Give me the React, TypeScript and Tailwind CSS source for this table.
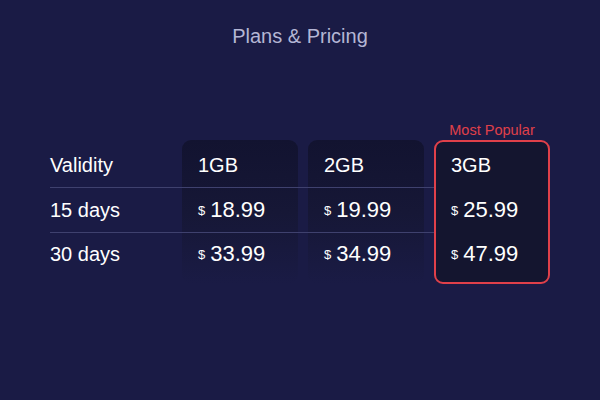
import React from "react";

const font = { fontFamily: '"Liberation Sans", Arial, sans-serif' };

function Price({ v }: { v: string }) {
  return (
    <div className="flex items-center gap-[5px]">
      <span className="text-[13px] leading-none">$</span>
      <span className="text-[22px] leading-[26px]">{v}</span>
    </div>
  );
}

export default function App() {
  const cols = [
    { name: "1GB", p: ["18.99", "33.99"] },
    { name: "2GB", p: ["19.99", "34.99"] },
    { name: "3GB", p: ["25.99", "47.99"] },
  ];
  return (
    <div style={font} className="w-[600px] h-[400px] bg-[#1a1b45] flex flex-col items-center text-white">
      <div className="pt-[22px] text-[20px] leading-[28px] text-[#b4b6d4]">Plans &amp; Pricing</div>
      <div className="mt-[90px] grid grid-cols-[122px_116px_116px_116px] grid-rows-[47px_1px_44px_1px_51px] gap-x-[10px]">
        <div className="col-start-2 row-start-1 row-end-6 rounded-[9px] bg-gradient-to-b from-[#121330] via-[#161736] to-[#1a1b45]" />
        <div className="col-start-3 row-start-1 row-end-6 rounded-[9px] bg-gradient-to-b from-[#121330] via-[#161736] to-[#1a1b45]" />
        <div className="col-start-4 row-start-1 row-end-6 rounded-[9px] bg-[#14152f] border-2 border-[#e0404a] relative">
          <div className="absolute bottom-full left-0 right-0 mb-[4px] text-center text-[14.5px] leading-[16px] text-[#e0404a]">
            Most Popular
          </div>
        </div>
        <div className="col-start-1 col-end-5 row-start-2 bg-[#3f416e]" />
        <div className="col-start-1 col-end-5 row-start-4 bg-[#3f416e]" />
        <div className="col-start-1 row-start-1 flex items-center pt-[3px] text-[20px] leading-[24px]">Validity</div>
        <div className="col-start-1 row-start-3 flex items-center text-[20px] leading-[24px]">15 days</div>
        <div className="col-start-1 row-start-5 flex items-start pt-[9px] text-[20px] leading-[24px]">30 days</div>
        <div className="col-start-2 row-start-1 flex items-center pt-[3px] pl-[16px] text-[20px] leading-[24px] relative">{cols[0].name}</div>
        <div className="col-start-3 row-start-1 flex items-center pt-[3px] pl-[16px] text-[20px] leading-[24px] relative">{cols[1].name}</div>
        <div className="col-start-4 row-start-1 flex items-center pt-[3px] pl-[17px] text-[20px] leading-[24px] relative">{cols[2].name}</div>
        <div className="col-start-2 row-start-3 flex items-center pl-[16px] relative"><Price v={cols[0].p[0]} /></div>
        <div className="col-start-3 row-start-3 flex items-center pl-[16px] relative"><Price v={cols[1].p[0]} /></div>
        <div className="col-start-4 row-start-3 flex items-center pl-[17px] relative"><Price v={cols[2].p[0]} /></div>
        <div className="col-start-2 row-start-5 flex items-start pt-[8px] pl-[16px] relative"><Price v={cols[0].p[1]} /></div>
        <div className="col-start-3 row-start-5 flex items-start pt-[8px] pl-[16px] relative"><Price v={cols[1].p[1]} /></div>
        <div className="col-start-4 row-start-5 flex items-start pt-[8px] pl-[17px] relative"><Price v={cols[2].p[1]} /></div>
      </div>
    </div>
  );
}
